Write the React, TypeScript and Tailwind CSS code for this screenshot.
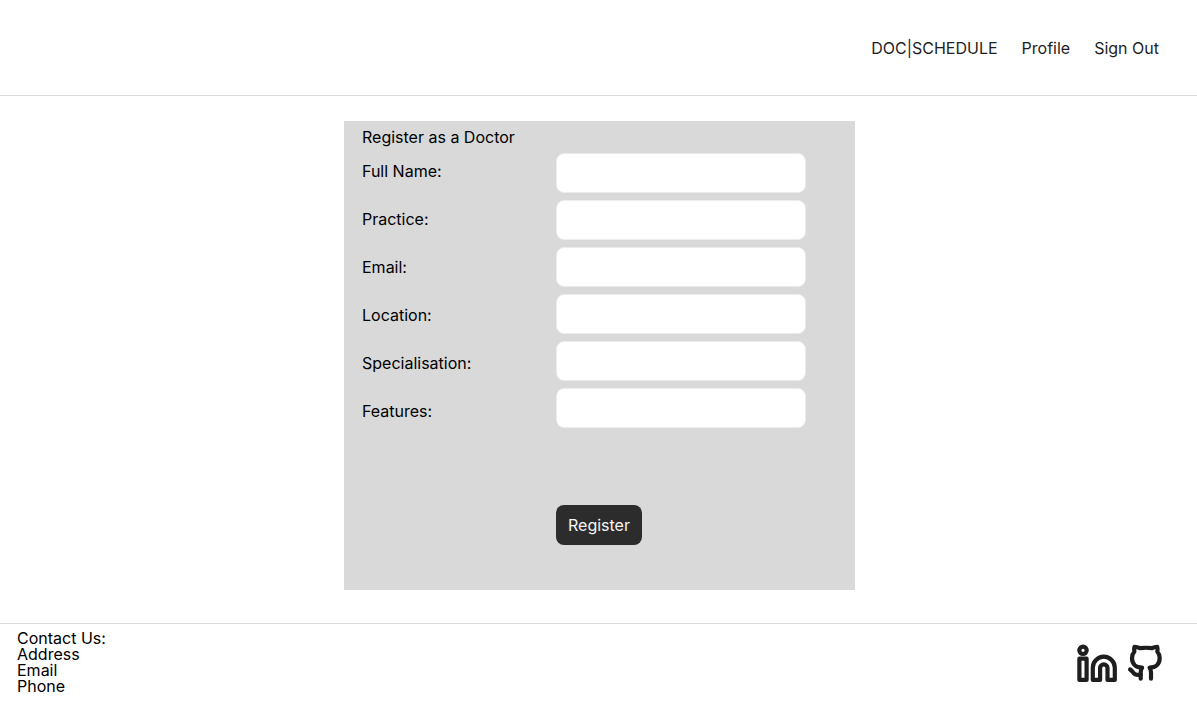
const fields = [
  { id: "full-name", label: "Full Name:", type: "text" },
  { id: "practice", label: "Practice:", type: "text" },
  { id: "email", label: "Email:", type: "email" },
  { id: "location", label: "Location:", type: "text" },
  { id: "specialisation", label: "Specialisation:", type: "text" },
  { id: "features", label: "Features:", type: "text" },
];

function LinkedInIcon() {
  return (
    <svg
      className="size-12"
      viewBox="0 0 48 48"
      fill="none"
      stroke="currentColor"
      strokeWidth="4.2"
      strokeLinejoin="round"
      aria-hidden="true"
    >
      <circle cx="11" cy="10.3" r="3.7" />
      <rect x="7.4" y="18.7" width="7.2" height="21.2" />
      <path d="M31.8 16.7a11 11 0 0 1 11 11v12.200h-7.300V28a3.700 3.700 0 0 0-7.400 0v11.900h-7.300V27.700a11 11 0 0 1 11-11z" />
    </svg>
  );
}

function GitHubIcon() {
  return (
    <svg
      className="size-12"
      viewBox="0 0 48 48"
      fill="none"
      stroke="currentColor"
      strokeWidth="4.2"
      strokeLinecap="round"
      strokeLinejoin="round"
      aria-hidden="true"
    >
      <path d="M31 38.7V32.500c0-2.100-.4-3.500-1.400-4.800 6.300 0 10.100-3.900 10.100-9.700 0-2.500-.8-4.700-2.400-6.400.5-1.700.4-3.300-.1-4.800-2 0-3.400.4-5.200 1.400-3.900-.6-8.300-.6-12.200 0-1.800-1-3.300-1.400-5.300-1.400-.5 1.500-.5 3.100-.1 4.800-1.600 1.700-2.400 3.900-2.400 6.400 0 5.800 3.800 9.700 10.100 9.700-1 1.300-1.400 2.700-1.400 4.800v6.200" />
      <path d="M10.100 29.500c2.400 1.200 2.800 3.500 4.800 4.600 1.500.9 3.600 1 5.800.6" />
    </svg>
  );
}

function Header() {
  return (
    <header className="border-b border-[#d9d9d9]">
      <nav className="flex h-[95px] items-center justify-end gap-6 pr-[38px] text-[#1e1e1e]">
        <a href="#home">DOC|SCHEDULE</a>
        <a href="#profile">Profile</a>
        <a href="#sign-out">Sign Out</a>
      </nav>
    </header>
  );
}

function RegisterForm() {
  return (
    <form
      className="w-full max-w-[511px] self-start bg-[#d9d9d9] pt-1 pr-[49px] pb-[45px] pl-[18px]"
      onSubmit={(event) => event.preventDefault()}
    >
      <h1>Register as a Doctor</h1>
      <div className="mt-1 grid grid-cols-[194px_1fr]">
        <div className="flex flex-col items-start gap-6 pt-1.5">
          {fields.map((field) => (
            <label key={field.id} htmlFor={field.id}>
              {field.label}
            </label>
          ))}
        </div>
        <div className="flex flex-col gap-[7px]">
          {fields.map((field) => (
            <input
              key={field.id}
              id={field.id}
              name={field.id}
              type={field.type}
              className="h-10 w-full rounded-lg border border-[#ececec] bg-white px-4"
            />
          ))}
        </div>
        <button
          type="submit"
          className="col-start-2 mt-[77px] h-10 justify-self-start rounded-lg bg-[#2c2c2c] px-3 text-[#f5f5f5]"
        >
          Register
        </button>
      </div>
    </form>
  );
}

function Footer() {
  return (
    <footer className="flex items-start justify-between border-t border-[#d9d9d9] pt-1.5 pr-[29px] pb-[9px] pl-[17px]">
      <address className="leading-4 not-italic">
        <p>Contact Us:</p>
        <p>Address</p>
        <p>Email</p>
        <p>Phone</p>
      </address>
      <div className="mt-2.5 flex text-[#1e1e1e]">
        <a href="#linkedin" aria-label="LinkedIn">
          <LinkedInIcon />
        </a>
        <a href="#github" aria-label="GitHub">
          <GitHubIcon />
        </a>
      </div>
    </footer>
  );
}

export default function App() {
  return (
    <div className="flex min-h-screen flex-col bg-white font-['Inter',sans-serif] text-base text-black">
      <Header />
      <main className="flex grow justify-center pt-[25px] pb-[33px] pl-0.5">
        <RegisterForm />
      </main>
      <Footer />
    </div>
  );
}
